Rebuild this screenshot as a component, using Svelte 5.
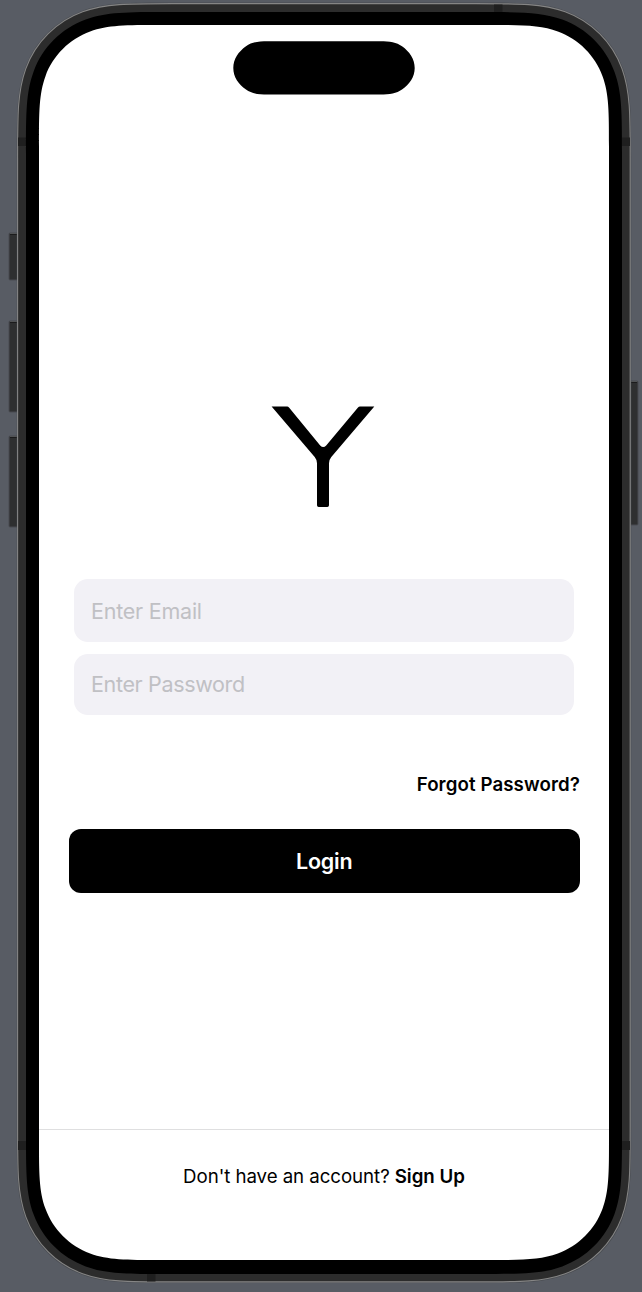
<script>
  let email = $state('');
  let password = $state('');

  // Rounded rectangle with continuous-curvature corners.
  function smoothRect(x, y, w, h, r) {
    const a = 1.5 * r, b = 1.07 * r, c = 0.851 * r;
    const d = 0.631494 * r, e = 0.08 * r, f = 0.376 * r, g = 0.173 * r;
    const R = x + w, B = y + h;
    return `M${x + a} ${y}H${R - a}
      C${R - b} ${y} ${R - c} ${y} ${R - d} ${y + e}
      C${R - f} ${y + g} ${R - g} ${y + f} ${R - e} ${y + d}
      C${R} ${y + c} ${R} ${y + b} ${R} ${y + a}V${B - a}
      C${R} ${B - b} ${R} ${B - c} ${R - e} ${B - d}
      C${R - g} ${B - f} ${R - f} ${B - g} ${R - d} ${B - e}
      C${R - c} ${B} ${R - b} ${B} ${R - a} ${B}H${x + a}
      C${x + b} ${B} ${x + c} ${B} ${x + d} ${B - e}
      C${x + f} ${B - g} ${x + g} ${B - f} ${x + e} ${B - d}
      C${x} ${B - c} ${x} ${B - b} ${x} ${B - a}V${y + a}
      C${x} ${y + b} ${x} ${y + c} ${x + e} ${y + d}
      C${x + g} ${y + f} ${x + f} ${y + g} ${x + d} ${y + e}
      C${x + c} ${y} ${x + b} ${y} ${x + a} ${y}Z`;
  }

  const buttons = [
    { x: 9, y: 233, w: 9, h: 47 },
    { x: 9, y: 321, w: 9, h: 91 },
    { x: 9, y: 436, w: 9, h: 91 },
    { x: 630, y: 381, w: 8, h: 144 }
  ];
  const bands = [
    { x: 18, y: 137.5, w: 8, h: 8.5 },
    { x: 622, y: 137.5, w: 8, h: 8.5 },
    { x: 18, y: 1141, w: 8, h: 9 },
    { x: 622, y: 1141, w: 8, h: 9 },
    { x: 494, y: 4.5, w: 8.5, h: 8 },
    { x: 147, y: 1274, w: 8.5, h: 7.5 }
  ];
</script>

<main class="stage">
  <svg class="device" width="642" height="1292" viewBox="0 0 642 1292" aria-hidden="true">
    {#each buttons as b}
      <rect x={b.x} y={b.y} width={b.w} height={b.h} rx="1" fill="#2e2f30" stroke="#484b50" />
      <path d="M{b.x + 1} {b.y + 1.5}h{b.w - 2}" stroke="#1b1b1c" />
      <path d="M{b.x + 1} {b.y + 0.5}h{b.w - 2}" stroke="#5c5d5f" stroke-width="0.7" />
    {/each}
    <path d={smoothRect(16.8, 2.6, 614.4, 1280.4, 103.5)} fill="#484b50" />
    <path d={smoothRect(17.6, 3.6, 612.6, 1278.3, 103)} fill="#2c2c2c" stroke="#858585" stroke-width="1.1" />
    {#each bands as b}
      <rect x={b.x} y={b.y} width={b.w} height={b.h} fill="#1f1f1f" />
    {/each}
    <path d={smoothRect(26, 12, 596, 1262, 94.5)} fill="#000" />
    <path d={smoothRect(39, 25, 570, 1235, 81)} fill="#fff" />
  </svg>

  <div class="screen">
    <svg class="island" width="182" height="54" viewBox="0 0 182 54" aria-hidden="true">
      <path d="M35 .2H147C157 .2 163.500 1.300 169 5.200C176.500 10.500 181.700 18 181.700 26.900C181.700 35.800 176.500 43.300 169 48.600C163.500 52.500 157 53.600 147 53.600H35C25 53.600 18.500 52.500 13 48.600C5.500 43.300 .3 35.800 .3 26.900C.3 18 5.500 10.500 13 5.200C18.500 1.300 25 .2 35 .2Z" />
    </svg>

    <svg class="logo" width="104" height="102" viewBox="0 0 104 102" role="img" aria-label="Y">
      <path d="M.6 .6H16.2Q17.200 .6 18 1.600L49.200 39.400Q52.200 42.500 55.200 39.400L87 1.600Q87.800 .6 89 .6H103.300L60.300 51Q58 53.800 58 57.300V99.300Q58 101 56.300 101H47.700Q46 101 46 99.300V57.300Q46 53.800 43.700 51Z" />
    </svg>

    <form class="fields">
      <input class="field email" type="email" placeholder="Enter Email" aria-label="Email" bind:value={email} />
      <input class="field password" type="password" placeholder="Enter Password" aria-label="Password" bind:value={password} />
    </form>

    <button class="forgot" type="button">Forgot Password?</button>
    <button class="login" type="button">Login</button>

    <footer class="footer">
      <span>Don't have an account?</span>
      <strong>Sign Up</strong>
    </footer>
  </div>
</main>

<style>
  :global(body) {
    margin: 0;
    background: #585c64;
    overflow: hidden;
  }
  .stage {
    position: relative;
    box-sizing: border-box;
    width: 642px;
    height: 1292px;
    padding: 25px 33px 32px 39px;
    background: #585c64;
    font-family: Inter, sans-serif;
  }
  .device {
    position: absolute;
    inset: 0;
  }
  .screen {
    position: relative;
    display: flex;
    flex-direction: column;
    box-sizing: border-box;
    width: 570px;
    height: 1235px;
    padding-top: 16px;
  }
  .island {
    align-self: center;
    flex: none;
  }
  .logo {
    align-self: center;
    margin: 311px 2px 0 0;
    flex: none;
  }
  .fields {
    display: flex;
    flex-direction: column;
    gap: 12px;
    margin: 71px 35px 0;
  }
  .field {
    box-sizing: border-box;
    width: 100%;
    padding: 0 17px;
    border: 0;
    border-radius: 14px;
    outline: 0;
    background: #f2f1f6;
    font: 400 21.5px Inter, sans-serif;
    letter-spacing: -0.35px;
    color: #000;
  }
  .field::placeholder {
    color: #c0c0c4;
    opacity: 1;
  }
  .email {
    height: 63px;
    padding-top: 1px;
    letter-spacing: -0.23px;
  }
  .password {
    height: 60.5px;
  }
  button {
    padding: 0;
    border: 0;
    background: none;
    font-family: Inter, sans-serif;
    font-weight: 600;
  }
  .forgot {
    align-self: flex-end;
    height: 24px;
    margin: 58.5px 29px 0 0;
    font-size: 18.7px;
    line-height: 24px;
    letter-spacing: 0.09px;
    color: #000;
  }
  .login {
    height: 64px;
    margin: 32px 29.5px 0 30px;
    border-radius: 12px;
    background: #000;
    font-size: 21.5px;
    letter-spacing: -0.2px;
    color: #fff;
  }
  .footer {
    display: flex;
    justify-content: center;
    gap: 5px;
    margin-top: auto;
    height: 95px;
    padding-top: 35px;
    border-top: 1px solid #dfdfe0;
    font-size: 18.7px;
    line-height: 24px;
    letter-spacing: -0.06px;
  }
  .footer strong {
    font-weight: 600;
    letter-spacing: 0;
  }
</style>
